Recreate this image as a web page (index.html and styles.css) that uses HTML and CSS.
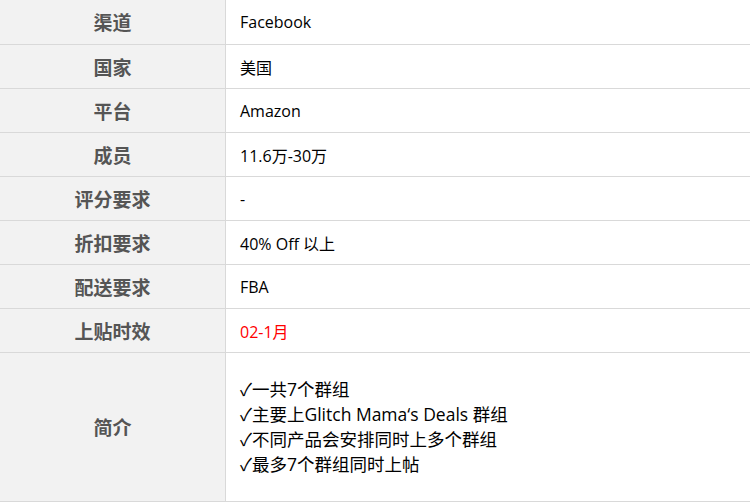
FILE: index.html
```html
<!DOCTYPE html>
<html lang="zh-CN">
<head>
<meta charset="utf-8">
<title>渠道信息</title>
<link rel="stylesheet" href="styles.css">
</head>
<body>
<table class="info">
  <tbody>
    <tr><th class="label">渠道</th><td class="value">Facebook</td></tr>
    <tr><th class="label">国家</th><td class="value">美国</td></tr>
    <tr><th class="label">平台</th><td class="value">Amazon</td></tr>
    <tr><th class="label">成员</th><td class="value">11.6万-30万</td></tr>
    <tr><th class="label">评分要求</th><td class="value">-</td></tr>
    <tr><th class="label">折扣要求</th><td class="value">40% Off 以上</td></tr>
    <tr><th class="label">配送要求</th><td class="value">FBA</td></tr>
    <tr><th class="label">上贴时效</th><td class="value red">02-1月</td></tr>
    <tr class="tall">
      <th class="label">简介</th>
      <td class="value list">
        <div>✓一共7个群组</div>
        <div>✓主要上Glitch Mama‘s Deals 群组</div>
        <div>✓不同产品会安排同时上多个群组</div>
        <div>✓最多7个群组同时上帖</div>
      </td>
    </tr>
  </tbody>
</table>
</body>
</html>
```

FILE: styles.css
```css
html, body {
  margin: 0;
  padding: 0;
  background: #ffffff;
}

.info {
  width: 750px;
  border-collapse: separate;
  border-spacing: 0;
  font-family: "Open Sans", "Noto Sans CJK SC", sans-serif;
  table-layout: fixed;
}

.info th,
.info td {
  box-sizing: border-box;
  height: 44px;
  border-bottom: 1px solid #d9d9d9;
  padding: 0;
  vertical-align: middle;
}

.info tr:first-child th,
.info tr:first-child td {
  height: 45px;
}

.label {
  width: 226px;
  background: #f2f2f2;
  border-right: 1px solid #d9d9d9;
  color: #555555;
  font-weight: 700;
  font-size: 19px;
  text-align: center;
}

.value {
  padding-left: 14px !important;
  color: #000000;
  font-size: 16px;
  text-align: left;
}

.red {
  color: #ff0000;
}

.tall th,
.tall td {
  height: 149px;
}

.list {
  font-size: 17.5px;
  line-height: 25px;
  padding-top: 0 !important;
}
```
